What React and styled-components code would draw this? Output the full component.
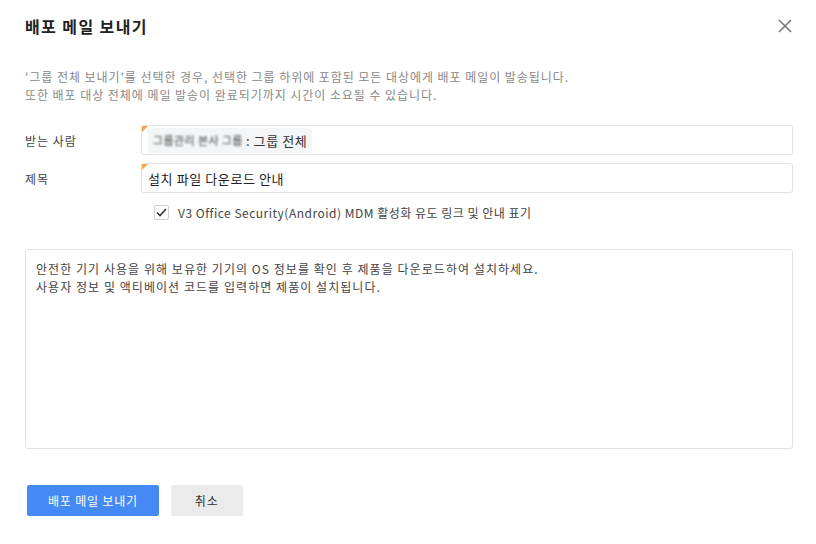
import React from 'react'
import styled, { createGlobalStyle } from 'styled-components'

const GlobalStyle = createGlobalStyle`
  html, body {
    margin: 0;
    padding: 0;
    background: #fff;
  }
  body {
    font-family: "Noto Sans CJK KR", "Noto Sans", sans-serif;
    color: #333;
  }
  * {
    box-sizing: border-box;
  }
`

const Dialog = styled.div`
  width: 816px;
  height: 544px;
  padding: 14px 23px 0 25px;
  display: flex;
  flex-direction: column;
`

const Header = styled.div`
  display: flex;
  justify-content: space-between;
  align-items: center;
  height: 24px;
`

const Title = styled.h1`
  margin: 0;
  font-size: 16px;
  font-weight: 700;
  color: #222;
  letter-spacing: 1.4px;
`

const CloseButton = styled.button`
  border: 0;
  background: none;
  padding: 0;
  width: 16px;
  height: 16px;
  cursor: pointer;
  display: flex;
`

const Notice = styled.p`
  margin: 30px 0 0;
  font-size: 12px;
  line-height: 18px;
  letter-spacing: 0.95px;
  color: #888;
`

const Form = styled.div`
  margin-top: 21px;
  display: flex;
  flex-direction: column;
  gap: 8px;
`

const Row = styled.div`
  display: flex;
  align-items: center;
`

const Label = styled.label`
  width: 116px;
  font-size: 12px;
  letter-spacing: 1px;
  color: #444;
`

const Field = styled.div`
  position: relative;
  flex: 1;
  height: 30px;
  border: 1px solid #e2e2e2;
  border-radius: 3px;
  display: flex;
  align-items: center;
  padding: 0 6px;
  font-size: 13px;
  letter-spacing: 0.6px;
  color: #222;
  &::before {
    content: '';
    position: absolute;
    top: 0;
    left: 0;
    border-style: solid;
    border-width: 6px 6px 0 0;
    border-color: #f5a54a transparent transparent transparent;
  }
`

const Chip = styled.span`
  display: inline-flex;
  align-items: center;
  gap: 3px;
  height: 25px;
  padding: 0 5px;
  background: #f3f5f6;
  border-radius: 3px;
  color: #333;
`

const Blurred = styled.span`
  filter: blur(1.2px);
  color: #444;
  font-size: 11px;
  letter-spacing: 0.4px;
`

const CheckRow = styled.label`
  display: flex;
  align-items: center;
  gap: 9px;
  margin: 3px 0 0 129px;
  font-size: 12px;
  letter-spacing: 0.5px;
  color: #444;
  cursor: pointer;
`

const Box = styled.span`
  width: 15px;
  height: 15px;
  border: 1px solid #cfcfcf;
  border-radius: 2px;
  display: flex;
  align-items: center;
  justify-content: center;
  background: #fff;
`

const Body = styled.div`
  margin-top: 28px;
  height: 200px;
  border: 1px solid #e2e2e2;
  border-radius: 3px;
  padding: 10px 10px;
  font-size: 12px;
  line-height: 18px;
  letter-spacing: 1.05px;
  color: #444;
`

const Footer = styled.div`
  margin-top: 36px;
  margin-left: 2px;
  display: flex;
  gap: 12px;
`

const Button = styled.button`
  height: 31px;
  border: 0;
  border-radius: 2px;
  padding: 0 ${p => p.$pad}px;
  font-family: inherit;
  font-size: 12px;
  letter-spacing: 0.8px;
  cursor: pointer;
  background: ${p => (p.$primary ? '#4589f5' : '#ebebeb')};
  color: ${p => (p.$primary ? '#fff' : '#333')};
`

export default function App() {
  return (
    <Dialog>
      <GlobalStyle />
      <Header>
        <Title>배포 메일 보내기</Title>
        <CloseButton aria-label="닫기">
          <svg width="16" height="16" viewBox="0 0 16 16">
            <path d="M2 2L14 14M14 2L2 14" stroke="#777" strokeWidth="1.6" />
          </svg>
        </CloseButton>
      </Header>
      <Notice>
        '그룹 전체 보내기'를 선택한 경우, 선택한 그룹 하위에 포함된 모든 대상에게 배포 메일이 발송됩니다.
        <br />
        또한 배포 대상 전체에 메일 발송이 완료되기까지 시간이 소요될 수 있습니다.
      </Notice>
      <Form>
        <Row>
          <Label>받는 사람</Label>
          <Field>
            <Chip>
              <Blurred>그룹관리 본사 그룹</Blurred>
              <span>: 그룹 전체</span>
            </Chip>
          </Field>
        </Row>
        <Row>
          <Label>제목</Label>
          <Field>설치 파일 다운로드 안내</Field>
        </Row>
        <CheckRow>
          <Box>
            <svg width="13" height="13" viewBox="0 0 13 13">
              <path d="M2 6.5L5 9.5L11 3" stroke="#333" strokeWidth="1.6" fill="none" />
            </svg>
          </Box>
          V3 Office Security(Android) MDM 활성화 유도 링크 및 안내 표기
        </CheckRow>
      </Form>
      <Body>
        안전한 기기 사용을 위해 보유한 기기의 OS 정보를 확인 후 제품을 다운로드하여 설치하세요.
        <br />
        사용자 정보 및 액티베이션 코드를 입력하면 제품이 설치됩니다.
      </Body>
      <Footer>
        <Button $primary $pad={21}>배포 메일 보내기</Button>
        <Button $pad={24}>취소</Button>
      </Footer>
    </Dialog>
  )
}
